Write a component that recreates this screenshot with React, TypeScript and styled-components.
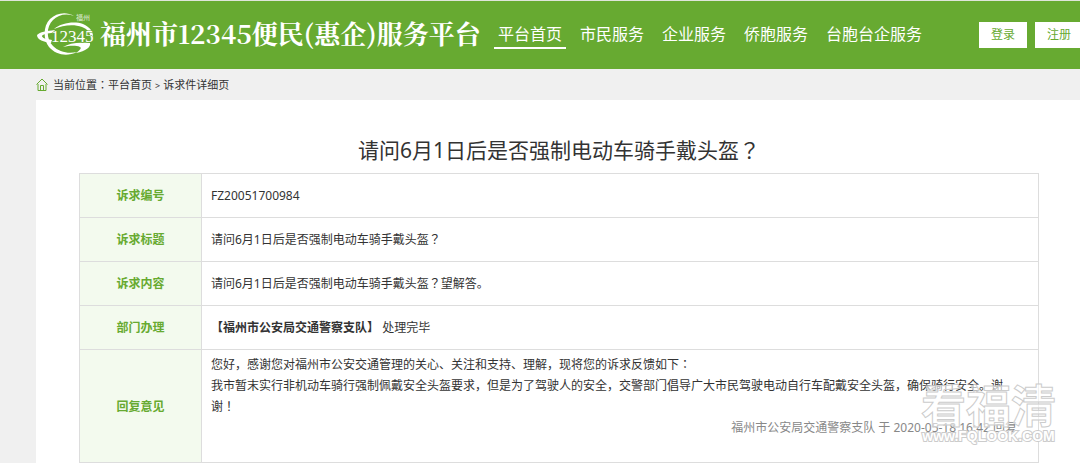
import React from "react";
import styled, { createGlobalStyle } from "styled-components";

const green = "#67aa31";
const sans = '"Noto Sans", "Noto Sans CJK SC", sans-serif';

const GlobalStyle = createGlobalStyle`
  * { box-sizing: border-box; }
  body {
    margin: 0;
    background: #f0f0f0;
    color: #333;
    font: 12px/21px ${sans};
    overflow: hidden;
  }
`;

const Header = styled.header`
  display: flex;
  align-items: center;
  height: 69px;
  padding-left: 36px;
  background: ${green};
  border-top: 1px solid #dfe5da;
  white-space: nowrap;
`;

const Brand = styled.a`
  display: flex;
  align-items: center;
  flex: none;
  gap: 4px;
  width: 458px;
  color: #fff;
  text-decoration: none;
`;

const BrandName = styled.h1`
  margin: 0;
  padding-bottom: 4px;
  font: 700 26px/40px "Noto Serif CJK SC", "Noto Sans CJK SC", serif;
`;

const Nav = styled.nav`
  display: flex;
  flex: 1;
  gap: 10px;
`;

const NavLink = styled.a<{ $active?: boolean }>`
  padding: 0 4px;
  border-bottom: 2px solid ${(p) => (p.$active ? "#fff" : "transparent")};
  color: #fff;
  font-size: 16px;
  line-height: 26px;
  text-decoration: none;
`;

const Account = styled.div`
  display: flex;
  flex: none;
  gap: 8px;
  margin-right: -3px;
`;

const AccountButton = styled.button`
  height: 26px;
  padding: 0 12px;
  border: 0;
  background: #fff;
  color: ${green};
  font: 12px/26px ${sans};
`;

const Breadcrumb = styled.nav`
  display: flex;
  align-items: center;
  gap: 5px;
  height: 31px;
  padding-left: 36px;
  font-size: 11px;
`;

const Crumb = styled.a`
  color: #333;
  text-decoration: none;
`;

const Separator = styled.span`
  margin: 0 3px;
  font-size: 9px;
`;

const Card = styled.main`
  position: relative;
  margin-left: 36px;
  padding: 35px 41px 0 43px;
  background: #fff;
`;

const Title = styled.h2`
  margin: 0 0 8px;
  font-size: 21px;
  font-weight: 400;
  line-height: 30px;
  text-align: center;
`;

const Table = styled.table`
  width: 100%;
  border-collapse: collapse;
  table-layout: fixed;
`;

const Label = styled.th`
  width: 122px;
  border: 1px solid #ddd;
  background: #f3faee;
  color: ${green};
  font-weight: 700;
`;

const Cell = styled.td`
  height: 44px;
  padding: 4px 21px 4px 9px;
  border: 1px solid #ddd;
`;

const Reply = styled.div`
  min-height: 104px;
`;

const Paragraph = styled.p`
  margin: 0;
`;

const Signature = styled.p`
  margin: 0;
  color: #888;
  text-align: right;
`;

const CenteredMark = styled.span`
  font-family: "Noto Sans CJK TC", sans-serif;
  line-height: 1;
`;

const Watermark = styled.div`
  position: absolute;
  right: 24px;
  top: 280px;
  color: rgba(255, 255, 255, 0.6);
  text-align: center;
  pointer-events: none;
`;

const WatermarkName = styled.div`
  font: 700 45px/48px "Noto Sans CJK SC", sans-serif;
  -webkit-text-stroke: 1px #ccc;
`;

const WatermarkSite = styled.div`
  font: 700 14px/16px "Liberation Sans", sans-serif;
  -webkit-text-stroke: 2px #ccc;
  color: #fff;
  paint-order: stroke;
`;

const Logo = () => (
  <svg width="60" height="46" viewBox="0 0 60 46" fill="#fff" aria-hidden="true">
    <path d="M38 4C30 -1 20 1 14 7C7 14 7 28 13 35C20 43 31 45 41 40C32 42 23 40 17 34C10 27 10 15 17 8C22 3 30 1 38 4Z" />
    <path d="M1 23C4 20 10 19 19 18L17 21C12 21 7 22 6 24C6 26 10 27 16 28L15 31C8 30 1 28 1 23Z" />
    <path d="M18 17C25 11 38 9 47 12C54 15 58 20 57 27L55 28C55 22 52 17 46 15C38 12 27 13 18 17Z" />
    <path d="M27 35C33 31 42 30 54 31C55 35 50 39 40 41C44 38 46 36 44 35C39 33 33 34 27 35Z" />
    <text
      x="15"
      y="30"
      fontFamily="Liberation Serif, serif"
      fontSize="17"
      stroke={green}
      strokeWidth="1"
      paintOrder="stroke"
    >
      12345
    </text>
    <text x="40" y="8" fontFamily="Noto Sans CJK SC, sans-serif" fontSize="7" opacity="0.8">福州</text>
  </svg>
);

const HomeIcon = () => (
  <svg width="12" height="13" viewBox="0 0 12 13" fill="none" stroke={green} aria-hidden="true">
    <path d="M0.5 6.5L6 1L11.5 6.5M2 6V12.5H10V6M4.5 12.5V7.5H7.5V12.5" />
  </svg>
);

/* Sets colons, question and exclamation marks in the middle of their cell. */
const Prose = ({ children }: { children: string }) => (
  <>
    {children.split(/([：？！])/).map((part, i) =>
      i % 2 ? <CenteredMark key={i}>{part}</CenteredMark> : part
    )}
  </>
);

const navItems = ["平台首页", "市民服务", "企业服务", "侨胞服务", "台胞台企服务"];
const question = "请问6月1日后是否强制电动车骑手戴头盔？";

const rows: { label: string; value: React.ReactNode }[] = [
  { label: "诉求编号", value: "FZ20051700984" },
  { label: "诉求标题", value: <Prose>{question}</Prose> },
  { label: "诉求内容", value: <Prose>{question + "望解答。"}</Prose> },
  { label: "部门办理", value: <><b>【福州市公安局交通警察支队】</b> 处理完毕</> },
  {
    label: "回复意见",
    value: (
      <Reply>
        <Paragraph>
          <Prose>您好，感谢您对福州市公安交通管理的关心、关注和支持、理解，现将您的诉求反馈如下：</Prose>
        </Paragraph>
        <Paragraph>
          <Prose>我市暂末实行非机动车骑行强制佩戴安全头盔要求，但是为了驾驶人的安全，交警部门倡导广大市民驾驶电动自行车配戴安全头盔，确保骑行安全。谢谢！</Prose>
        </Paragraph>
        <Signature>福州市公安局交通警察支队 于 2020-05-18 16:42 回复</Signature>
      </Reply>
    ),
  },
];

export default function App() {
  return (
    <>
      <GlobalStyle />
      <Header>
        <Brand href="#">
          <Logo />
          <BrandName>福州市12345便民(惠企)服务平台</BrandName>
        </Brand>
        <Nav>
          {navItems.map((item, i) => (
            <NavLink key={item} href="#" $active={i === 0}>{item}</NavLink>
          ))}
        </Nav>
        <Account>
          <AccountButton>登录</AccountButton>
          <AccountButton>注册</AccountButton>
        </Account>
      </Header>
      <Breadcrumb>
        <HomeIcon />
        <div>
          <Prose>当前位置：</Prose>
          <Crumb href="#">平台首页</Crumb>
          <Separator>&gt;</Separator>
          <Crumb href="#">诉求件详细页</Crumb>
        </div>
      </Breadcrumb>
      <Card>
        <Title><Prose>{question}</Prose></Title>
        <Table>
          <tbody>
            {rows.map((row) => (
              <tr key={row.label}>
                <Label scope="row">{row.label}</Label>
                <Cell>{row.value}</Cell>
              </tr>
            ))}
          </tbody>
        </Table>
        <Watermark>
          <WatermarkName>看福清</WatermarkName>
          <WatermarkSite>www.FQLOOK.COM</WatermarkSite>
        </Watermark>
      </Card>
    </>
  );
}
